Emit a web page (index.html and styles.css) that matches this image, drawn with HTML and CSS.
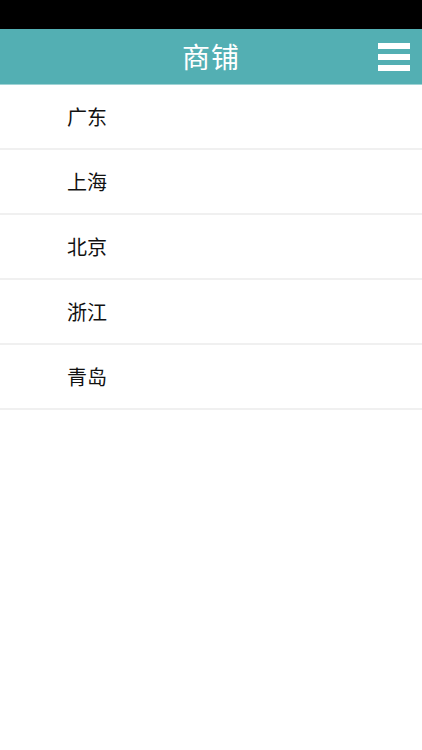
FILE: index.html
```html
<!doctype html>
<html lang="zh">
  <head>
    <meta charset="utf-8" />
    <meta name="viewport" content="width=device-width, initial-scale=1.0" />
    <title>商铺</title>
    <link rel="stylesheet" href="styles.css">
  </head>

  <body>
    <div class="status_bar"></div>
    <div class="header">
      <div class="header_title">商铺</div>
      <div class="menu_btn">
        <span class="menu_line"></span>
        <span class="menu_line"></span>
        <span class="menu_line"></span>
      </div>
    </div>
    <ul class="area_list">
      <li class="area_item">广东</li>
      <li class="area_item">上海</li>
      <li class="area_item">北京</li>
      <li class="area_item">浙江</li>
      <li class="area_item">青岛</li>
    </ul>
  </body>
</html>
```

FILE: styles.css
```css
body {
  margin: 0;
  background-color: #fff;
  font-family: "Noto Sans CJK SC", "Noto Sans", sans-serif;
}

.status_bar {
  height: 29px;
  background-color: #000;
}

.header {
  position: relative;
  height: 55px;
  background-color: #53afb3;
  border-bottom: 1px solid #9fd3d5;
  display: flex;
  justify-content: center;
  align-items: center;
}

.header_title {
  color: #fff;
  font-size: 28px;
  line-height: 1;
  letter-spacing: 1px;
  margin-top: -2px;
}

.menu_btn {
  position: absolute;
  right: 12px;
  top: 14px;
  width: 32px;
  display: flex;
  flex-direction: column;
  gap: 5px;
}

.menu_line {
  display: block;
  height: 6px;
  background-color: #fff;
}

.area_list {
  list-style: none;
  margin: 0;
  padding: 0;
}

.area_item {
  height: 63px;
  display: flex;
  align-items: center;
  padding-left: 67px;
  font-size: 20px;
  color: #111;
  border-bottom: 2px solid #f0f0f0;
}
```
